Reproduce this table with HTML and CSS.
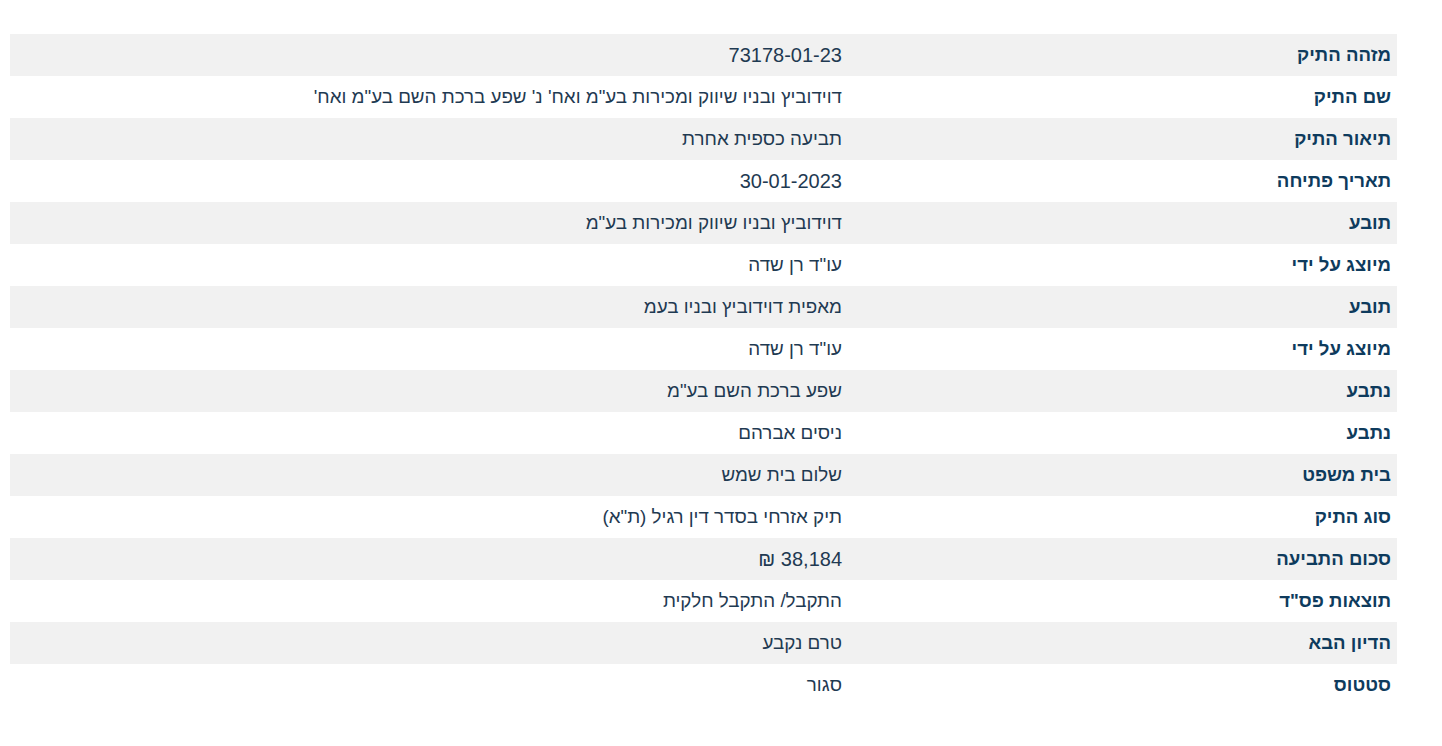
FILE: index.html
```html
<!DOCTYPE html>
<html lang="he" dir="rtl">
<head>
<meta charset="utf-8">
<link rel="stylesheet" href="styles.css">
</head>
<body>
<div class="page">
<table class="details">
<tbody>
<tr><th>מזהה התיק</th><td class="num">73178-01-23</td></tr>
<tr><th>שם התיק</th><td>דוידוביץ ובניו שיווק ומכירות בע"מ ואח' נ' שפע ברכת השם בע"מ ואח'</td></tr>
<tr><th>תיאור התיק</th><td>תביעה כספית אחרת</td></tr>
<tr><th>תאריך פתיחה</th><td class="num">30-01-2023</td></tr>
<tr><th>תובע</th><td>דוידוביץ ובניו שיווק ומכירות בע"מ</td></tr>
<tr><th>מיוצג על ידי</th><td>עו"ד רן שדה</td></tr>
<tr><th>תובע</th><td>מאפית דוידוביץ ובניו בעמ</td></tr>
<tr><th>מיוצג על ידי</th><td>עו"ד רן שדה</td></tr>
<tr><th>נתבע</th><td>שפע ברכת השם בע"מ</td></tr>
<tr><th>נתבע</th><td>ניסים אברהם</td></tr>
<tr><th>בית משפט</th><td>שלום בית שמש</td></tr>
<tr><th>סוג התיק</th><td>תיק אזרחי בסדר דין רגיל (ת"א)</td></tr>
<tr><th>סכום התביעה</th><td class="num">38,184 ₪</td></tr>
<tr><th>תוצאות פס"ד</th><td>התקבל/ התקבל חלקית</td></tr>
<tr><th>הדיון הבא</th><td>טרם נקבע</td></tr>
<tr><th>סטטוס</th><td>סגור</td></tr>
</tbody>
</table>
</div>
</body>
</html>
```
FILE: styles.css
```css
html, body {
  margin: 0;
  padding: 0;
  background: #ffffff;
}
body {
  font-family: "Liberation Sans", Arial, sans-serif;
}
.page {
  padding: 34px 45px 40px 10px;
}
.details {
  width: 1387px;
  border-collapse: collapse;
  border-spacing: 0;
}
.details tr {
  height: 42px;
}
.details tr:nth-child(odd) {
  background: #f1f1f1;
}
.details th,
.details td {
  padding: 0 6px;
  text-align: right;
  vertical-align: middle;
}
.details th {
  width: 537px;
  font-weight: bold;
  color: #0e3b5d;
  font-size: 18.6px;
}
.details td {
  color: #1f3a52;
  font-weight: normal;
  font-size: 18.8px;
}
.details td.num {
  font-size: 20px;
}
```
